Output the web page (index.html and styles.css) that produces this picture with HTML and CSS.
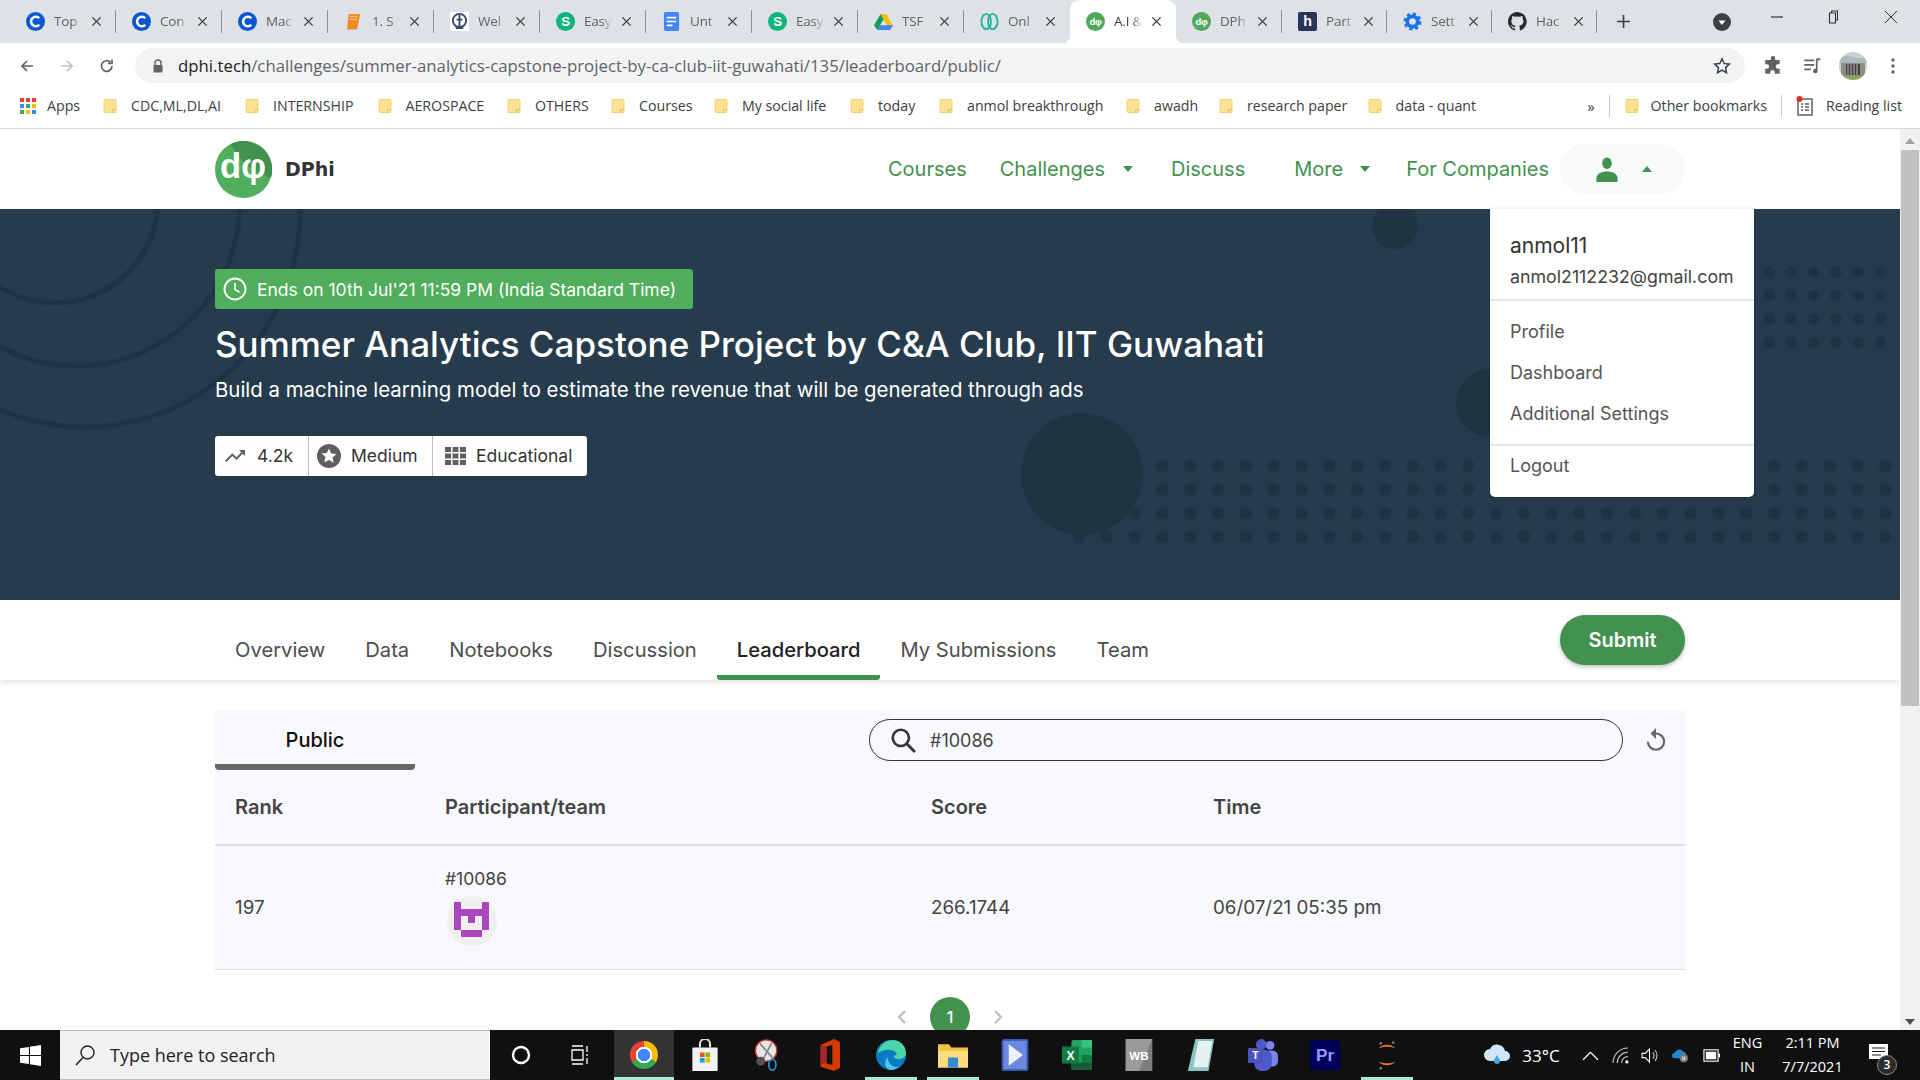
FILE: index.html
```html
<!DOCTYPE html>
<html lang="en">
<head>
<meta charset="utf-8">
<title>DPhi Leaderboard</title>
<link rel="stylesheet" href="styles.css">
</head>
<body>
<svg class="defs" width="0" height="0">
  <defs>
    <symbol id="i-c" viewBox="0 0 20 20"><circle cx="10" cy="10" r="10" fill="#0b57d0"/><path d="M14 6.6a5 5 0 1 0 0 6.8" fill="none" stroke="#fff" stroke-width="2.6"/></symbol>
    <symbol id="i-s" viewBox="0 0 20 20"><circle cx="10" cy="10" r="10" fill="#0fb57f"/><text x="10" y="15" text-anchor="middle" font-family="Liberation Sans" font-weight="700" font-size="14" fill="#fff">S</text></symbol>
    <symbol id="i-d" viewBox="0 0 20 20"><circle cx="10" cy="10" r="10" fill="#4fa95a"/><text x="10" y="13.5" text-anchor="middle" font-family="Liberation Sans" font-weight="700" font-size="10" fill="#fff">dφ</text></symbol>
    <symbol id="i-x" viewBox="0 0 12 12"><path d="M1.5 1.5l9 9M10.5 1.5l-9 9" stroke="#3c4043" stroke-width="1.5" fill="none"/></symbol>
    <symbol id="i-f" viewBox="0 0 16 16"><path d="M2 2.500a1 1 0 0 1 1-1h10a1 1 0 0 1 1 1v11a1 1 0 0 1-1 1H3a1 1 0 0 1-1-1z" fill="#fde293" stroke="#f0c95f" stroke-width=".8"/><path d="M10.500 14.500v-3H14" fill="none" stroke="#e5b84e" stroke-width=".8"/></symbol>
  </defs>
</svg>

<div class="window">
  <div class="tabstrip">
    <div class="tab"><svg class="fav"><use href="#i-c"/></svg><span class="tab-title">Top</span><svg class="tab-x"><use href="#i-x"/></svg></div>
    <div class="tab"><svg class="fav"><use href="#i-c"/></svg><span class="tab-title">Con</span><svg class="tab-x"><use href="#i-x"/></svg></div>
    <div class="tab"><svg class="fav"><use href="#i-c"/></svg><span class="tab-title">Mac</span><svg class="tab-x"><use href="#i-x"/></svg></div>
    <div class="tab"><svg class="fav" viewBox="0 0 20 20"><path d="M5 2h12l-3 15a2 2 0 0 1-2 1.500H3z" fill="#f08a24"/><path d="M6.500 5h8M6 8h8" stroke="#fbd08f" stroke-width="1"/></svg><span class="tab-title">1. S</span><svg class="tab-x"><use href="#i-x"/></svg></div>
    <div class="tab"><svg class="fav" viewBox="0 0 20 20"><rect width="20" height="20" fill="#fff"/><circle cx="10" cy="9" r="7" fill="none" stroke="#37476b" stroke-width="2"/><path d="M10 3v14M6 17h8M7 8h6" stroke="#37476b" stroke-width="2"/></svg><span class="tab-title">Wel</span><svg class="tab-x"><use href="#i-x"/></svg></div>
    <div class="tab"><svg class="fav"><use href="#i-s"/></svg><span class="tab-title">Easy</span><svg class="tab-x"><use href="#i-x"/></svg></div>
    <div class="tab"><svg class="fav" viewBox="0 0 20 20"><rect x="2" width="16" height="20" rx="2" fill="#4285f4"/><path d="M5 6h10M5 10h10M5 14h6" stroke="#fff" stroke-width="1.800"/></svg><span class="tab-title">Unt</span><svg class="tab-x"><use href="#i-x"/></svg></div>
    <div class="tab"><svg class="fav"><use href="#i-s"/></svg><span class="tab-title">Easy</span><svg class="tab-x"><use href="#i-x"/></svg></div>
    <div class="tab"><svg class="fav" viewBox="0 0 20 20"><path d="M7 2h6l7 13h-6z" fill="#fbbc04"/><path d="M7 2l3 6-6.500 11L0 14z" fill="#0f9d58"/><path d="M6 14h14l-3 5H3.500z" fill="#4285f4"/></svg><span class="tab-title">TSF</span><svg class="tab-x"><use href="#i-x"/></svg></div>
    <div class="tab tab-plain"><svg class="fav" viewBox="0 0 20 20"><g fill="none" stroke="#25b5a4" stroke-width="2"><ellipse cx="6.500" cy="10" rx="5" ry="8"/><ellipse cx="13.500" cy="10" rx="5" ry="8"/></g></svg><span class="tab-title">Onl</span><svg class="tab-x"><use href="#i-x"/></svg></div>
    <div class="tab tab-active"><svg class="fav"><use href="#i-d"/></svg><span class="tab-title">A.I &amp;</span><svg class="tab-x"><use href="#i-x"/></svg></div>
    <div class="tab"><svg class="fav"><use href="#i-d"/></svg><span class="tab-title">DPh</span><svg class="tab-x"><use href="#i-x"/></svg></div>
    <div class="tab tab-narrow"><svg class="fav" viewBox="0 0 20 20"><rect width="20" height="20" rx="2" fill="#2a3358"/><text x="10" y="15" text-anchor="middle" font-family="Liberation Sans" font-weight="700" font-size="15" fill="#fff">h</text></svg><span class="tab-title">Part</span><svg class="tab-x"><use href="#i-x"/></svg></div>
    <div class="tab tab-narrow"><svg class="fav" viewBox="0 0 20 20"><circle cx="10" cy="10" r="5.500" fill="none" stroke="#1a73e8" stroke-width="4"/><circle cx="10" cy="10" r="8" fill="none" stroke="#1a73e8" stroke-width="3" stroke-dasharray="3.300 3"/></svg><span class="tab-title">Sett</span><svg class="tab-x"><use href="#i-x"/></svg></div>
    <div class="tab tab-narrow"><svg class="fav" viewBox="0 0 16 16"><path fill="#24292e" d="M8 0a8 8 0 0 0-2.500 15.600c.4.100.5-.2.500-.4v-1.400c-2.200.5-2.700-1-2.700-1-.4-.9-.9-1.200-.9-1.200-.7-.5.100-.5.100-.5.800.100 1.200.8 1.200.8.700 1.200 1.900.9 2.300.7.100-.5.300-.9.500-1.100-1.800-.2-3.700-.9-3.700-4 0-.9.300-1.600.8-2.100-.1-.2-.4-1 .1-2.100 0 0 .7-.2 2.200.8a7.600 7.600 0 0 1 4 0c1.500-1 2.200-.8 2.200-.8.400 1.100.2 1.900.1 2.100.5.600.8 1.300.8 2.100 0 3.100-1.900 3.700-3.700 3.900.3.300.6.800.6 1.500v2.200c0 .2.100.5.600.4A8 8 0 0 0 8 0z"/></svg><span class="tab-title">Hac</span><svg class="tab-x"><use href="#i-x"/></svg></div>
    <svg class="new-tab" viewBox="0 0 16 16"><path d="M8 1v14M1 8h14" stroke="#3c4043" stroke-width="1.800"/></svg>
    <svg class="tab-search" viewBox="0 0 18 18"><circle cx="9" cy="9" r="9" fill="#3c4043"/><path d="M5.500 7.500h7L9 12z" fill="#fff"/></svg>
    <div class="win-controls">
      <svg viewBox="0 0 14 14"><path d="M1 7h12" stroke="#333" stroke-width="1.200"/></svg>
      <svg viewBox="0 0 14 14"><path d="M4.500 3V1h6v9h-2M2.500 3h6v10h-6z" fill="none" stroke="#333" stroke-width="1.100"/></svg>
      <svg viewBox="0 0 14 14"><path d="M1 1l12 12M13 1L1 13" stroke="#333" stroke-width="1"/></svg>
    </div>
  </div>

  <div class="toolbar">
    <svg class="tb-ico" viewBox="0 0 16 16"><path d="M14 8H3M8 3L3 8l5 5" fill="none" stroke="#5f6368" stroke-width="1.700"/></svg>
    <svg class="tb-ico" viewBox="0 0 16 16"><path d="M2 8h11M8 3l5 5-5 5" fill="none" stroke="#bdc1c6" stroke-width="1.700"/></svg>
    <svg class="tb-ico" viewBox="0 0 16 16"><path d="M13 8a5.300 5.300 0 1 1-1.500-3.700M13 1.500v4H9" fill="none" stroke="#5f6368" stroke-width="1.700"/></svg>
    <div class="omnibox">
      <svg class="lock" viewBox="0 0 12 14"><path d="M3 6V4a3 3 0 0 1 6 0v2" fill="none" stroke="#5f6368" stroke-width="1.400"/><rect x="1.500" y="6" width="9" height="7.500" rx="1" fill="#5f6368"/></svg>
      <span class="url"><b>dphi.tech</b>/challenges/summer-analytics-capstone-project-by-ca-club-iit-guwahati/135/leaderboard/public/</span>
      <svg class="star" viewBox="0 0 18 18"><path d="M9 1.800l2.200 4.700 5.100.6-3.800 3.500 1 5.100L9 13.200l-4.500 2.500 1-5.100-3.800-3.500 5.100-.6z" fill="none" stroke="#3c4043" stroke-width="1.500"/></svg>
    </div>
    <div class="tb-right">
      <svg class="tb-ico2" viewBox="0 0 18 18"><path d="M7 2a2 2 0 0 1 4 0v1.500h4v4h-1.500a2 2 0 0 0 0 4H15V16h-4.500v-1.500a2 2 0 0 0-4 0V16H2v-4.500h1.500a2 2 0 0 0 0-4H2v-4h5z" fill="#5f6368"/></svg>
      <svg class="tb-ico2" viewBox="0 0 18 18"><path d="M2 4h9M2 8h9M2 12h6" stroke="#5f6368" stroke-width="1.600"/><path d="M14 3v10.500a2 2 0 1 1-1.500-1.900V3z" fill="#5f6368"/><path d="M13 3h3.500" stroke="#5f6368" stroke-width="1.800"/></svg>
      <svg class="tb-avatar" viewBox="0 0 28 28"><defs><clipPath id="av"><circle cx="14" cy="14" r="14"/></clipPath></defs><g clip-path="url(#av)"><rect width="28" height="28" fill="#c9d1d6"/><path d="M0 6q7-4 14-1t14-1v7H0z" fill="#aeb9c0"/><rect x="2" y="11" width="24" height="13" fill="#8d8d86"/><rect x="7" y="12" width="14" height="11" fill="#45433f"/><path d="M9 12v11M12 12v11M15 12v11M18 12v11" stroke="#b9b6ae"/><rect y="24" width="28" height="4" fill="#8fa65a"/></g></svg>
      <svg class="tb-dots" viewBox="0 0 4 16"><circle cx="2" cy="2" r="1.700"/><circle cx="2" cy="8" r="1.700"/><circle cx="2" cy="14" r="1.700"/></svg>
    </div>
  </div>

  <div class="bookmarks">
    <div class="bm-grid">
      <div class="bm"><svg class="apps" viewBox="0 0 16 16"><g fill="#ea4335"><rect width="4" height="4"/><rect x="6" width="4" height="4"/><rect x="12" width="4" height="4"/></g><g fill="#4285f4"><rect y="6" width="4" height="4"/><rect x="6" y="6" width="4" height="4" fill="#34a853"/><rect x="12" y="6" width="4" height="4" fill="#fbbc04"/></g><g fill="#34a853"><rect y="12" width="4" height="4"/><rect x="6" y="12" width="4" height="4" fill="#fbbc04"/><rect x="12" y="12" width="4" height="4" fill="#4285f4"/></g></svg>Apps</div>
      <div class="bm"><svg class="folder"><use href="#i-f"/></svg>CDC,ML,DL,AI</div>
      <div class="bm"><svg class="folder"><use href="#i-f"/></svg>INTERNSHIP</div>
      <div class="bm"><svg class="folder"><use href="#i-f"/></svg>AEROSPACE</div>
      <div class="bm"><svg class="folder"><use href="#i-f"/></svg>OTHERS</div>
      <div class="bm"><svg class="folder"><use href="#i-f"/></svg>Courses</div>
      <div class="bm"><svg class="folder"><use href="#i-f"/></svg>My social life</div>
      <div class="bm"><svg class="folder"><use href="#i-f"/></svg>today</div>
      <div class="bm"><svg class="folder"><use href="#i-f"/></svg>anmol breakthrough</div>
      <div class="bm"><svg class="folder"><use href="#i-f"/></svg>awadh</div>
      <div class="bm"><svg class="folder"><use href="#i-f"/></svg>research paper</div>
      <div class="bm"><svg class="folder"><use href="#i-f"/></svg>data - quant</div>
    </div>
    <div class="bm-right">
      <span class="bm-more">»</span>
      <span class="bm-sep"></span>
      <div class="bm"><svg class="folder"><use href="#i-f"/></svg>Other bookmarks</div>
      <span class="bm-sep"></span>
      <div class="bm bm-reading"><svg class="reading" viewBox="0 0 18 20"><rect x="2" y="3" width="14" height="16" fill="none" stroke="#5f6368" stroke-width="1.500"/><path d="M5 8h2M9 8h4M5 11h2M9 11h4M5 14h2M9 14h4" stroke="#5f6368" stroke-width="1.300"/><circle cx="3.500" cy="3" r="3" fill="#d93025"/></svg>Reading list</div>
    </div>
  </div>

  <div class="viewport">
    <main class="page">
      <header class="site-header">
        <div class="site-inner">
          <div class="brand">
            <svg class="brand-logo" viewBox="0 0 56 56"><circle cx="28" cy="28" r="28" fill="#50ae5c"/><path d="M15 3.200A28 28 0 0 1 55 36Q30 30 15 3.200z" fill="#43914f"/><text x="27.500" y="36" text-anchor="middle" font-family="Liberation Sans" font-weight="700" font-size="34" fill="#fff">dφ</text></svg>
            <span class="brand-name">DPhi</span>
          </div>
          <nav class="nav">
            <a class="nav-link">Courses</a>
            <a class="nav-link nav-challenges">Challenges<i class="caret"></i></a>
            <a class="nav-link nav-discuss">Discuss</a>
            <a class="nav-link nav-more">More<i class="caret caret-more"></i></a>
            <a class="nav-link nav-companies">For Companies</a>
            <div class="user-pill">
              <svg class="user-ico" viewBox="0 0 24 26"><ellipse cx="12" cy="6.500" rx="5" ry="6" fill="#43914f"/><path d="M1 26v-4c0-5 6-7 11-7s11 2 11 7v4z" fill="#43914f"/></svg>
              <i class="caret caret-up"></i>
            </div>
          </nav>
        </div>
      </header>

      <section class="hero">
        <svg class="hero-art" width="1900" height="391" viewBox="0 0 1900 391">
          <defs>
            <pattern id="dots-a" x="1065" y="256.700" width="27.800" height="23.700" patternUnits="userSpaceOnUse"><circle cx="14" cy="0" r="6.500" fill="#1f3443"/><circle cx="14" cy="23.700" r="6.500" fill="#1f3443"/></pattern>
            <pattern id="dots-b" x="1758" y="51" width="22.300" height="23.600" patternUnits="userSpaceOnUse"><circle cx="11" cy="12" r="6" fill="#1f3443"/></pattern>
          </defs>
          <g fill="none" stroke="#1f3443" stroke-width="5">
            <circle cx="55" cy="-9" r="103"/>
            <circle cx="77" cy="-6" r="163"/>
            <circle cx="85" cy="3" r="215"/>
          </g>
          <circle cx="1395" cy="17" r="23" fill="#1f3443"/>
          <circle cx="1490" cy="194" r="34" fill="#1f3443"/>
          <rect x="1148" y="245" width="752" height="48" fill="url(#dots-a)"/>
          <rect x="1120" y="293" width="780" height="24" fill="url(#dots-a)"/>
          <rect x="1065" y="317" width="835" height="24" fill="url(#dots-a)"/>
          <rect x="1758" y="51" width="134" height="95" fill="url(#dots-b)"/>
          <circle cx="1082" cy="265" r="61" fill="#1f3443"/>
        </svg>
        <div class="hero-inner">
          <div class="deadline">
            <svg class="clock" viewBox="0 0 24 24"><circle cx="12" cy="12" r="10.500" fill="none" stroke="#fff" stroke-width="1.900"/><path d="M12 6v6.500l4.500 2.700" fill="none" stroke="#fff" stroke-width="1.700"/></svg>
            <span>Ends on 10th Jul'21 11:59 PM (India Standard Time)</span>
          </div>
          <h1 class="hero-title">Summer Analytics Capstone Project by C&amp;A Club, IIT Guwahati</h1>
          <p class="hero-sub">Build a machine learning model to estimate the revenue that will be generated through ads</p>
          <div class="chips">
            <div class="chip chip-a"><svg class="chip-ico" viewBox="0 0 24 24"><path d="M16 6l2.300 2.300-4.900 4.900-4-4L2 16.600 3.400 18l6-6 4 4 6.300-6.300L22 12V6z" fill="#5f5f5f"/></svg>4.2k</div>
            <div class="chip chip-b"><svg class="chip-ico" viewBox="0 0 24 24"><circle cx="12" cy="12" r="12" fill="#5f5f5f"/><path d="M12 4.500l2.200 5 5.300.5-4 3.500 1.200 5.300L12 15.900l-4.700 2.400 1.200-5.300-4-3.500 5.300-.5z" fill="#fff"/></svg>Medium</div>
            <div class="chip chip-c"><svg class="chip-ico chip-grid" viewBox="0 0 21 18"><path d="M0 0h6v5H0zM7.500 0h6v5h-6zM15 0h6v5h-6zM0 6.500h6v5H0zM7.500 6.500h6v5h-6zM15 6.500h6v5h-6zM0 13h6v5H0zM7.500 13h6v5h-6zM15 13h6v5h-6z" fill="#5f5f5f"/></svg>Educational</div>
          </div>
        </div>
      </section>

      <div class="subnav">
        <div class="subnav-inner">
          <div class="tabs">
            <a class="stab">Overview</a>
            <a class="stab">Data</a>
            <a class="stab">Notebooks</a>
            <a class="stab">Discussion</a>
            <a class="stab stab-on">Leaderboard</a>
            <a class="stab">My Submissions</a>
            <a class="stab">Team</a>
          </div>
          <button class="submit">Submit</button>
        </div>
      </div>

      <section class="board">
        <div class="board-top">
          <div class="pub-tab">Public</div>
          <div class="board-tools">
            <div class="search">
              <svg class="search-ico" viewBox="0 0 24 24"><circle cx="10" cy="10" r="7.500" fill="none" stroke="#333" stroke-width="2.400"/><path d="M15.500 15.500L23 23" stroke="#333" stroke-width="2.600"/></svg>
              <span>#10086</span>
            </div>
            <svg class="reset" viewBox="0 0 24 24"><path d="M12 5V1L7 6l5 5V7a6.500 6.500 0 1 1-6.500 6.500h-2A8.500 8.500 0 1 0 12 5z" fill="#666"/></svg>
          </div>
        </div>
        <div class="row row-head">
          <div>Rank</div><div>Participant/team</div><div>Score</div><div>Time</div>
        </div>
        <div class="row row-body">
          <div>197</div>
          <div class="team">
            <span class="team-name">#10086</span>
            <svg class="team-avatar" viewBox="0 0 50 50"><circle cx="25" cy="25" r="25" fill="#efefef"/><g fill="#ab47bc"><path d="M7 6h7v7h21V6h7v28h-7V20h-7v7h-7v-7h-7v14H7z"/><path d="M14 34h21v7H14z"/></g></svg>
          </div>
          <div>266.1744</div>
          <div>06/07/21 05:35 pm</div>
        </div>
      </section>

      <div class="pager">
        <svg class="chev" viewBox="0 0 10 16"><path d="M8 2L2 8l6 6" fill="none" stroke="#bbb" stroke-width="2"/></svg>
        <span class="page-num">1</span>
        <svg class="chev" viewBox="0 0 10 16"><path d="M2 2l6 6-6 6" fill="none" stroke="#bbb" stroke-width="2"/></svg>
      </div>

      <div class="user-menu">
        <div class="menu-head">
          <div class="menu-name">anmol11</div>
          <div class="menu-mail">anmol2112232@gmail.com</div>
        </div>
        <div class="menu-links">
          <div>Profile</div>
          <div>Dashboard</div>
          <div>Additional Settings</div>
        </div>
        <div class="menu-out">Logout</div>
      </div>
    </main>
    <div class="scrollbar">
      <i class="sb-up"></i>
      <div class="sb-thumb"></div>
      <i class="sb-down"></i>
    </div>
  </div>

  <footer class="taskbar">
    <div class="start"><svg viewBox="0 0 20 20"><path d="M0 3l8.500-1.200v7.700H0zM9.500 1.600L20 0v9.500H9.500zM0 10.500h8.500v7.700L0 17zM9.500 10.500H20V20L9.500 18.400z" fill="#fff"/></svg></div>
    <div class="task-search">
      <svg viewBox="0 0 22 22"><circle cx="13.500" cy="8.500" r="6.500" fill="none" stroke="#222" stroke-width="1.400"/><path d="M9 13.500L2 21" stroke="#222" stroke-width="1.600"/></svg>
      <span>Type here to search</span>
    </div>
    <div class="sys-btn"><svg viewBox="0 0 20 20"><circle cx="10" cy="10" r="8" fill="none" stroke="#fff" stroke-width="2.400"/></svg></div>
    <div class="sys-btn sys-task"><svg viewBox="0 0 20 20"><path d="M2 1h11M2 19h11M2 5h11v10H2zM17 1v6M17 9v2M17 13v6" fill="none" stroke="#fff" stroke-width="1.300"/></svg></div>
    <div class="apps-row">
      <div class="slot slot-on"><span class="chrome-logo"></span></div>
      <div class="slot"><svg viewBox="0 0 30 38"><path d="M9 10V6a6 6 0 0 1 12 0v4" fill="none" stroke="#ddd" stroke-width="2.500"/><rect y="10" width="30" height="28" rx="1" fill="#f2f2f2"/><rect x="9" y="16" width="5.500" height="5.500" fill="#f25022"/><rect x="15.500" y="16" width="5.500" height="5.500" fill="#7fba00"/><rect x="9" y="22.500" width="5.500" height="5.500" fill="#00a4ef"/><rect x="15.500" y="22.500" width="5.500" height="5.500" fill="#ffb900"/></svg></div>
      <div class="slot"><svg viewBox="0 0 30 36"><ellipse cx="14" cy="13" rx="12" ry="12" fill="#e8e8e8" stroke="#c33" stroke-width="1.500"/><path d="M7 5l14 16M20 5L11 22" stroke="#888" stroke-width="2"/><circle cx="8" cy="25" r="5" fill="#555"/><ellipse cx="21" cy="29" rx="4" ry="6" fill="none" stroke="#2a8fd0" stroke-width="2"/></svg></div>
      <div class="slot"><svg viewBox="0 0 26 38"><path d="M3 7l16-7 7 4v30l-7 4-16-5z" fill="#d83b01"/><path d="M10 9l7-2v24l-7-2z" fill="#101010"/><path d="M3 7v24l7-3V9z" fill="#a4262c"/></svg></div>
      <div class="slot slot-ind"><svg viewBox="0 0 36 36"><circle cx="18" cy="18" r="18" fill="#0c7bc4"/><path d="M2 16C4 5 14 0 20 0c9 0 16 7 16 16 0 4-4 7-9 7-4 0-6-2-6-4 3 0 5-2 3-4-6-6-17-3-22 1z" fill="#4bd6a8"/><path d="M14 20c0 8 6 14 14 12-3 2-6 4-10 4-6 0-10-8-4-16z" fill="#53c6f0"/></svg></div>
      <div class="slot slot-ind"><svg viewBox="0 0 36 30"><path d="M0 2h13l3 4h20v24H0z" fill="#f5c243"/><rect y="10" width="36" height="20" fill="#fcdc7d"/><rect x="12" y="18" width="12" height="12" fill="#2f8fd0"/></svg></div>
      <div class="slot"><svg viewBox="0 0 30 36"><rect width="30" height="36" rx="2" fill="#3557b5"/><rect x="2" y="2" width="26" height="32" fill="#6b8adf"/><path d="M8 6l16 12L8 30z" fill="#eaf0ff"/></svg></div>
      <div class="slot"><svg viewBox="0 0 32 32"><rect x="10" width="22" height="32" rx="2" fill="#21a366"/><rect x="21" width="11" height="8" fill="#33c481"/><rect x="21" y="16" width="11" height="8" fill="#107c41"/><rect x="10" y="24" width="22" height="8" fill="#185c37"/><rect y="7" width="18" height="18" rx="1" fill="#107c41"/><text x="9" y="21" text-anchor="middle" font-family="Liberation Sans" font-weight="700" font-size="13" fill="#fff">X</text></svg></div>
      <div class="slot"><svg viewBox="0 0 30 36"><rect width="30" height="36" fill="#7d7d7d"/><path d="M0 0h30L15 36H0z" fill="#9a9a9a"/><text x="15" y="24" text-anchor="middle" font-family="Liberation Sans" font-weight="700" font-size="13" fill="#fff">WB</text></svg></div>
      <div class="slot"><svg viewBox="0 0 28 34"><path d="M8 0h20l-6 34H0z" fill="#8dc3c4"/><path d="M11 2h15l-5 28H6z" fill="#e6f2f2"/></svg></div>
      <div class="slot"><svg viewBox="0 0 34 36"><circle cx="25" cy="7" r="5" fill="#7b83eb"/><rect x="18" y="13" width="16" height="18" rx="6" fill="#7b83eb"/><circle cx="15" cy="6" r="6" fill="#5059c9"/><rect x="7" y="12" width="20" height="24" rx="8" fill="#5059c9"/><rect y="10" width="17" height="17" rx="1" fill="#4b53bc"/><text x="8.500" y="23" text-anchor="middle" font-family="Liberation Sans" font-weight="700" font-size="12" fill="#fff">T</text></svg></div>
      <div class="slot"><svg viewBox="0 0 28 28"><rect width="28" height="28" rx="3" fill="#00005b"/><text x="14" y="20" text-anchor="middle" font-family="Liberation Sans" font-weight="700" font-size="16" fill="#9999ff">Pr</text></svg></div>
      <div class="slot slot-ind"><svg viewBox="0 0 26 36"><path d="M3 11c5-6 15-6 20 0-5-3-15-3-20 0zM3 25c5 6 15 6 20 0-5 3-15 3-20 0z" fill="#f37626"/><circle cx="20" cy="4" r="1.500" fill="#777"/><circle cx="6" cy="5" r="1.500" fill="#777"/><circle cx="6" cy="33" r="1.500" fill="#777"/></svg></div>
    </div>
    <div class="tray">
      <svg class="tray-cloud" viewBox="0 0 28 24"><path d="M7 18a6 6 0 0 1 0-12 8 8 0 0 1 15 2 5 5 0 0 1 0 10z" fill="#cfe6f7"/><path d="M14 12c-2 3-3 4-3 6a3 3 0 0 0 6 0c0-2-1-3-3-6z" fill="#4aa3df"/></svg>
      <span class="tray-temp">33°C</span>
      <svg class="tray-i tray-chev" viewBox="0 0 16 10"><path d="M1 9l7-7 7 7" fill="none" stroke="#fff" stroke-width="1.200"/></svg>
      <svg class="tray-i tray-wifi" viewBox="0 0 16 16"><path d="M1 15A14 14 0 0 1 15 1M5 15A10 10 0 0 1 15 5M9 15a6 6 0 0 1 6-6" fill="none" stroke="#ccc" stroke-width="1"/><circle cx="14" cy="14" r="1.500" fill="#fff"/></svg>
      <svg class="tray-i tray-vol" viewBox="0 0 16 16"><path d="M1 6h3l4-4v12l-4-4H1z" fill="none" stroke="#fff" stroke-width="1"/><path d="M11 5a4 4 0 0 1 0 6M13 3a7 7 0 0 1 0 10" fill="none" stroke="#ccc" stroke-width="1"/></svg>
      <svg class="tray-i" viewBox="0 0 18 16"><path d="M3 11a3 3 0 0 1 0-6 5 5 0 0 1 9-1 4 4 0 0 1 2 7z" fill="#1e88d8"/><circle cx="12.500" cy="11" r="4.500" fill="#777"/><path d="M11.500 9v4M13.500 9v4" stroke="#fff"/></svg>
      <svg class="tray-i" viewBox="0 0 18 14"><rect x="1" y="1" width="15" height="12" fill="none" stroke="#fff" stroke-width="1.200"/><rect x="3" y="3" width="11" height="8" fill="#fff"/><rect x="16.500" y="5" width="1.500" height="4" fill="#fff"/></svg>
      <div class="tray-lang"><span>ENG</span><span>IN</span></div>
      <div class="tray-clock"><span>2:11 PM</span><span>7/7/2021</span></div>
      <div class="notif">
        <svg viewBox="0 0 20 20"><path d="M0 0h19v15H0z" fill="#fff"/><path d="M3 4h13M3 7.500h13M3 11h9" stroke="#222" stroke-width="1.200"/></svg>
        <span class="notif-count">3</span>
      </div>
    </div>
  </footer>
</div>
</body>
</html>
```
FILE: styles.css
```css
* { box-sizing: border-box; }
html, body { margin: 0; height: 100%; overflow: hidden; }
body { font-family: Inter, "Liberation Sans", sans-serif; color: #333; }
.defs { position: absolute; }
.window { display: flex; flex-direction: column; height: 1080px; width: 1920px; }

/* tab strip */
.tabstrip { height: 43px; background: #dee1e6; display: flex; padding-left: 10px; flex: none; font-family: "Open Sans", sans-serif; }
.tab { position: relative; width: 106px; height: 43px; display: flex; align-items: center; padding-left: 16px; font-size: 13.500px; letter-spacing: -.2px; color: #5f6368; }
.tab-narrow { width: 105px; }
.tab::after { content: ""; position: absolute; right: 0; top: 10px; height: 23px; width: 1px; background: #8d9094; }
.tab-plain::after, .tab-active::after { display: none; }
.tab-active { background: #fff; border-radius: 9px 9px 0 0; color: #3c4043; }
.tab-active::before { content: ""; position: absolute; left: -8px; right: -8px; bottom: 0; height: 8px; z-index: 0; background: radial-gradient(circle at 0 0, #dee1e6 8px, #fff 8.500px) left / 8px 8px no-repeat, radial-gradient(circle at 100% 0, #dee1e6 8px, #fff 8.500px) right / 8px 8px no-repeat; }
.fav { width: 19px; height: 19px; flex: none; position: relative; }
.tab-title { width: 28px; margin: 0 0 2px 9px; white-space: nowrap; overflow: hidden; position: relative; -webkit-mask-image: linear-gradient(90deg, #000 65%, transparent); mask-image: linear-gradient(90deg, #000 65%, transparent); }
.tab-x { width: 11px; height: 11px; margin-left: 9px; flex: none; position: relative; }
.new-tab { width: 15px; height: 15px; margin: 14px 0 0 19px; flex: none; }
.tab-search { width: 18px; height: 18px; margin: 13px 0 0 82px; flex: none; }
.win-controls { display: flex; margin-left: auto; padding-top: 10px; }
.win-controls svg { width: 14px; height: 14px; margin: 0 21.500px; }
.win-controls svg:last-child { margin-right: 22px; }

/* toolbar */
.toolbar { height: 45px; background: #fff; flex: none; display: flex; align-items: center; padding-left: 19px; }
.tb-ico { width: 16px; height: 16px; margin-right: 24px; flex: none; }
.omnibox { width: 1610px; height: 35px; margin-left: -4px; border-radius: 18px; background: #f1f3f4; display: flex; align-items: center; padding-left: 17px; font-family: "Open Sans", sans-serif; }
.lock { width: 12px; height: 14px; flex: none; }
.url { margin-left: 14px; font-size: 16.800px; color: #5f6368; white-space: nowrap; }
.url b { font-weight: 400; color: #202124; }
.star { width: 18px; height: 18px; margin-left: auto; margin-right: 14px; }
.tb-right { display: flex; align-items: center; margin-left: 18px; }
.tb-ico2 { width: 20px; height: 20px; margin-right: 19px; }
.tb-avatar { width: 28px; height: 28px; margin-left: -2px; margin-right: 24px; }
.tb-dots { width: 4px; height: 16px; fill: #5f6368; }

/* bookmarks */
.bookmarks { height: 41px; flex: none; background: #fff; border-bottom: 1px solid #d9dadc; display: flex; padding: 0 0 5px 16px; align-items: center; font-family: "Open Sans", sans-serif; font-size: 14.200px; color: #3c4043; }
.bm-grid { display: grid; grid-template-columns: 86px 142px 132.500px 129.500px 104px 103px 136px 89px 187px 93px 148.600px 150px; }
.bm { display: flex; align-items: center; white-space: nowrap; }
.folder { width: 16px; height: 18px; margin-right: 13px; flex: none; }
.apps { width: 16px; height: 16px; margin: 0 11px 0 4px; }
.bm-right { display: flex; align-items: center; margin-left: auto; padding-right: 18px; }
.bm-more { margin-right: 14px; font-size: 15px; }
.bm-sep { width: 1px; height: 22px; background: #c8cacc; }
.bm-right .bm { margin: 0 14px 0 14px; }
.bm-right .bm .folder { margin-right: 11px; }
.bm-right .bm-reading { margin-right: 0; }
.reading { width: 18px; height: 20px; margin-right: 12px; }

/* page */
.viewport { flex: 1; min-height: 0; display: flex; overflow: hidden; }
.page { width: 1900px; position: relative; overflow: hidden; background: #fff; }
.site-header { height: 80px; background: #fff; }
.site-inner { width: 1470px; margin-left: 215px; height: 100%; display: flex; align-items: center; justify-content: space-between; }
.brand { display: flex; align-items: center; gap: 13px; }
.brand-logo { width: 57px; height: 57px; }
.brand-name { font-family: "DejaVu Sans", sans-serif; font-weight: 700; font-size: 19px; color: #333; }
.nav { display: flex; align-items: center; color: #43914f; font-size: 20px; }
.nav-link { display: flex; align-items: center; white-space: nowrap; }
.nav-challenges { margin-left: 33px; }
.nav-discuss { margin-left: 38px; }
.nav-more { margin-left: 49px; }
.nav-companies { margin-left: 36px; }
.caret { width: 0; height: 0; border: 5px solid transparent; border-top: 6px solid #43914f; border-bottom: 0; margin-left: 18px; }
.caret-more { margin-left: 17px; }
.caret-up { border-top: 0; border-bottom: 6px solid #43914f; margin-left: 23px; }
.user-pill { width: 125px; height: 50px; margin-left: 11px; border-radius: 25px; background: #f8faf8; display: flex; align-items: center; padding-left: 35px; }
.user-ico { width: 24px; height: 25px; }

.hero { position: relative; height: 391px; background: #263c4c; overflow: hidden; }
.hero-art { position: absolute; left: 0; top: 0; }
.hero-inner { position: relative; width: 1470px; margin-left: 215px; padding-top: 60px; }
.deadline { width: 478px; height: 40px; border-radius: 3px; background: #50ae5c; color: #fff; display: flex; align-items: center; gap: 10px; padding-left: 8px; font-size: 17.500px; white-space: nowrap; }
.clock { width: 24px; height: 24px; flex: none; }
.hero-title { margin: 12px 0 0; font-size: 35px; line-height: 46px; font-weight: 500; color: #fff; white-space: nowrap; }
.hero-sub { margin: 9px 0 0; font-size: 20.400px; line-height: 28px; color: #fff; white-space: nowrap; }
.chips { display: flex; margin-top: 31.500px; height: 40px; width: 372px; background: #fff; border-radius: 3px; font-size: 17.500px; color: #333; }
.chip { display: flex; align-items: center; gap: 10px; white-space: nowrap; }
.chip + .chip { border-left: 1px solid #bbb; }
.chip-ico { width: 24px; height: 24px; flex: none; }
.chip-grid { width: 21px; height: 18px; }
.chip-a { padding: 0 16px 0 8px; width: 93px; }
.chip-b { padding: 0 15px 0 8px; width: 124px; }
.chip-c { padding: 0 15px 0 12px; flex: 1; }

.subnav { height: 80px; background: #fff; box-shadow: 0 2px 6px rgba(0, 0, 0, .12); position: relative; }
.subnav-inner { width: 1470px; margin-left: 215px; height: 100%; display: flex; justify-content: space-between; align-items: flex-start; }
.tabs { display: flex; height: 80px; align-items: flex-end; }
.stab { height: 60px; padding: 18px 20px 0; font-size: 20.200px; line-height: 24px; color: #4d4d4d; white-space: nowrap; border-bottom: 5px solid transparent; }
.stab-on { color: #222; font-weight: 500; border-bottom-color: #43914f; border-radius: 0 0 3px 3px; }
.submit { margin-top: 15px; width: 125px; height: 50px; border: 0; border-radius: 25px; background: #43914f; color: #fff; font: 600 20px Inter, sans-serif; box-shadow: 0 2px 4px rgba(0, 0, 0, .25); }

.board { width: 1470px; height: 260px; margin: 30px 0 0 215px; background: #f8f9fd; border-bottom: 1px solid #dcdde0; }
.board-top { height: 60px; display: flex; }
.pub-tab { width: 200px; height: 60px; text-align: center; padding-top: 18px; font-size: 20px; line-height: 24px; font-weight: 500; color: #111; border-bottom: 6px solid #666; border-radius: 0 0 4px 4px; }
.board-tools { flex: 1; display: flex; padding: 9px 0 0 454px; }
.search { width: 754px; height: 42px; border: 1px solid #333; border-radius: 21px; display: flex; align-items: center; padding-left: 20px; gap: 14px; font-size: 18px; color: #444; }
.search-ico { width: 26px; height: 26px; }
.reset { width: 26px; height: 26px; margin: 8px 0 0 20px; }
.row { display: grid; grid-template-columns: 210px 486px 282px 1fr; padding-left: 20px; font-size: 18.800px; color: #444; }
.row-head { height: 76px; align-items: center; font-size: 20px; font-weight: 600; border-bottom: 2px solid #dcdee3; }
.row-body { height: 123px; align-items: center; }
.team { display: flex; flex-direction: column; align-items: flex-start; margin-top: 0; font-size: 17.500px; }
.team-name { line-height: 20px; }
.team-avatar { width: 50px; height: 50px; margin: 7px 0 0 2px; }

.pager { display: flex; align-items: center; justify-content: center; gap: 23px; margin: 27px 0 0 0; }
.chev { width: 10px; height: 16px; }
.page-num { width: 40px; height: 40px; border-radius: 50%; background: #43914f; color: #fff; font-size: 16px; font-weight: 500; text-align: center; line-height: 40px; }

.user-menu { position: absolute; left: 1490px; top: 80px; width: 264px; height: 288px; background: #fff; border-radius: 0 0 5px 5px; box-shadow: 0 1px 4px rgba(0, 0, 0, .2); font-size: 18px; color: #555; }
.menu-head { height: 92px; padding: 23px 20px 0; border-bottom: 2px solid #e6e6e6; }
.menu-name { font-size: 21px; line-height: 28px; color: #333; }
.menu-mail { font-size: 17.800px; line-height: 26px; margin-top: 4px; color: #444; white-space: nowrap; }
.menu-links { height: 145px; padding: 10px 20px 0; border-bottom: 2px solid #e6e6e6; }
.menu-links div { height: 41px; line-height: 41px; }
.menu-out { padding: 8px 20px 0; line-height: 24px; }

.scrollbar { width: 20px; background: #f1f1f1; display: flex; flex-direction: column; align-items: center; position: relative; }
.sb-up { border: 5px solid transparent; border-top: 0; border-bottom: 6px solid #a3a3a3; margin-top: 9px; }
.sb-thumb { width: 18px; height: 556px; background: #c1c1c1; margin-top: 6px; }
.sb-down { border: 5px solid transparent; border-bottom: 0; border-top: 6px solid #505050; margin-top: auto; margin-bottom: 5px; }

/* taskbar */
.taskbar { height: 50px; flex: none; background: #101010; display: flex; font-family: "Open Sans", sans-serif; color: #fff; }
.start { width: 60px; display: flex; align-items: center; justify-content: center; }
.start svg { width: 21px; height: 21px; }
.task-search { width: 430px; background: #f2f2f2; border: 1px solid #bcbcbc; border-width: 1px 0; display: flex; align-items: center; gap: 14px; padding-left: 14px; color: #222; font-size: 18px; }
.task-search svg { width: 22px; height: 22px; }
.sys-btn { width: 61px; display: flex; align-items: center; justify-content: center; }
.sys-btn svg { width: 20px; height: 20px; }
.sys-task { width: 63px; padding-right: 5px; }
.apps-row { display: flex; }
.slot { width: 62px; height: 50px; display: flex; align-items: center; justify-content: center; position: relative; }
.slot svg { width: 30px; height: 32px; }
.slot-on { background: #333; width: 60px; }
.slot-on::after, .slot-ind::after { content: ""; position: absolute; left: 5px; right: 5px; bottom: 0; height: 3px; background: #a8edd0; }
.slot-on::after { left: 0; right: 0; }
.chrome-logo { width: 28px; height: 28px; border-radius: 50%; background: radial-gradient(circle, #4285f4 0 6px, #fff 6.500px 8px, transparent 8.500px), conic-gradient(#fbbc04 0 120deg, #34a853 120deg 240deg, #ea4335 240deg); }
.tray { margin-left: auto; display: flex; align-items: center; font-size: 16px; padding-right: 27px; }
.tray-cloud { width: 28px; height: 24px; }
.tray-temp { margin-left: 11px; font-size: 17px; width: 38px; white-space: nowrap; }
.tray-i { width: 17px; height: 17px; margin-left: 14px; }
.tray-chev { height: 11px; margin-left: 22px; }
.tray-wifi { margin-left: 13px; }
.tray-vol { margin-left: 11.700px; }
.tray-lang { display: flex; flex-direction: column; align-items: center; width: 30px; margin-left: 12.600px; font-size: 14.500px; line-height: 24px; }
.tray-clock { display: flex; flex-direction: column; align-items: center; width: 74px; margin-left: 13px; font-size: 14.500px; line-height: 24px; white-space: nowrap; }
.notif { position: relative; width: 24px; height: 28px; margin-left: 19.500px; }
.notif svg { width: 20px; height: 20px; position: absolute; left: 0; top: 3px; }
.notif-count { position: absolute; right: -4px; bottom: -6px; width: 20px; height: 20px; border-radius: 50%; background: #2d2d2d; border: 1px solid #888; font-size: 12px; font-weight: 600; text-align: center; line-height: 18px; }
```
